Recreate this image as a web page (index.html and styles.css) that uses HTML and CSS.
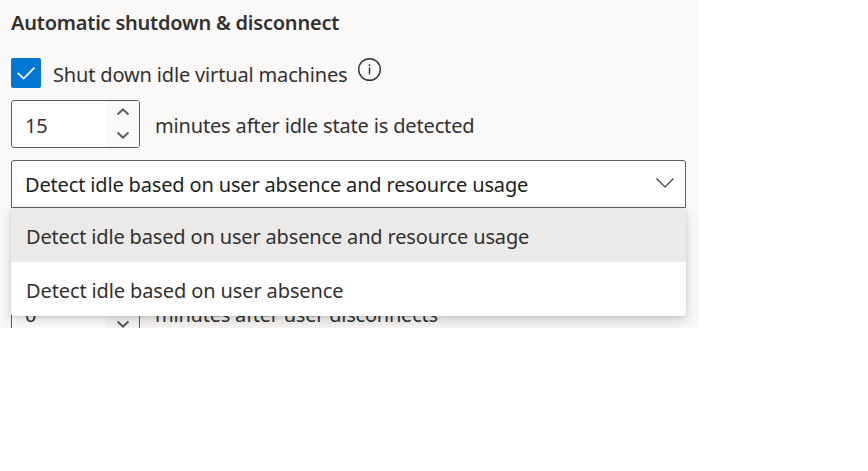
FILE: index.html
```html
<!DOCTYPE html>
<html lang="en">
<head>
<meta charset="utf-8">
<title>Automatic shutdown</title>
<link rel="stylesheet" href="styles.css">
</head>
<body>
<main class="panel">
  <h2 class="heading">Automatic shutdown &amp; disconnect</h2>
  <div class="check-row">
    <span class="checkbox" role="checkbox" aria-checked="true">
      <svg width="30" height="30" viewBox="0 0 30 30"><path d="M6.7 14.8 12.6 20.6 23.5 9.6"/></svg>
    </span>
    <span class="check-label">Shut down idle virtual machines</span>
    <svg class="info" width="24" height="24" viewBox="0 0 24 24"><circle cx="11.5" cy="11.5" r="10.8"/><path d="M11.5 9.5V16.5M11.5 6.2V8"/></svg>
  </div>
  <div class="spin-row">
    <div class="spinner">
      <span class="value">15</span>
      <span class="arrows">
        <svg width="14" height="8" viewBox="0 0 14 8"><path d="M1.5 6.6 7 1.4 12.5 6.6"/></svg>
        <svg width="14" height="8" viewBox="0 0 14 8"><path d="M1.5 1.4 7 6.6 12.5 1.4"/></svg>
      </span>
    </div>
    <span class="unit">minutes after idle state is detected</span>
  </div>
  <div class="dropdown">
    <div class="selected">
      <span>Detect idle based on user absence and resource usage</span>
      <svg width="20" height="12" viewBox="0 0 20 12"><path d="M1.5 1.5 10 10 18.5 1.5"/></svg>
    </div>
    <div class="menu">
      <div class="option active">Detect idle based on user absence and resource usage</div>
      <div class="option short">Detect idle based on user absence</div>
    </div>
  </div>
  <div class="spin-row last">
    <div class="spinner">
      <span class="value">0</span>
      <span class="arrows">
        <svg width="14" height="8" viewBox="0 0 14 8"><path d="M1.5 6.6 7 1.4 12.5 6.6"/></svg>
        <svg width="14" height="8" viewBox="0 0 14 8"><path d="M1.5 1.4 7 6.6 12.5 1.4"/></svg>
      </span>
    </div>
    <span class="unit user">minutes after user disconnects</span>
  </div>
</main>
</body>
</html>
```
FILE: styles.css
```css
* { box-sizing: border-box; }
body { margin: 0; background: #fff; color: #323130; font: 400 20px/28px "Noto Sans", "Open Sans", sans-serif; letter-spacing: -0.16px; }
svg { display: block; flex: none; fill: none; }
.panel { width: 699px; height: 328px; padding: 9px 13px 0 11px; background: #faf9f8; overflow: hidden; white-space: nowrap; }
.heading { margin: 0; height: 28px; font-size: 20px; line-height: 28px; font-weight: 600; letter-spacing: -0.22px; }
.check-row { display: flex; height: 32px; margin-top: 20px; align-items: flex-start; }
.checkbox { width: 30px; height: 30px; margin-top: 1px; border-radius: 2px; background: #0078d4; }
.checkbox path { stroke: #fff; stroke-width: 1.7; }
.check-label { width: 294px; margin: 4px 11px 0 12px; }
.info { margin-top: 1px; stroke: #323130; stroke-width: 1.4; }
.spin-row { display: flex; height: 48px; margin-top: 11px; gap: 15px; align-items: center; }
.spinner { display: flex; width: 129px; height: 48px; border: 1px solid #605e5c; border-radius: 3px; background: #fff; overflow: hidden; }
.value { flex: 1; padding-left: 13px; line-height: 50px; }
.unit { padding-top: 3px; }
.user { letter-spacing: -0.23px; }
.arrows { display: flex; flex-direction: column; justify-content: space-between; align-items: center; width: 33px; padding: 7px 0 8px; background: #faf9f8; }
.arrows path { stroke: #605e5c; stroke-width: 2; }
.dropdown { position: relative; width: 675px; margin-top: 12px; }
.selected { display: flex; height: 48px; padding: 1px 10px 0 13px; align-items: center; justify-content: space-between; border: 1px solid #605e5c; border-radius: 3px 3px 0 0; background: #fff; color: #201f1e; }
.selected svg { margin-bottom: 3px; }
.selected path { stroke: #4a3434; stroke-width: 1.2; }
.menu { position: absolute; z-index: 1; top: 48px; left: 0; width: 675px; background: #fff; border-radius: 0 0 3px 3px; box-shadow: 0 6px 14px rgba(0,0,0,.14), 0 1px 4px rgba(0,0,0,.12); }
.option { height: 54px; padding: 1px 15px 0; line-height: 56px; }
.short { letter-spacing: -0.12px; }
.active { background: #ebeae8; }
.last { margin-top: 81px; }
```
